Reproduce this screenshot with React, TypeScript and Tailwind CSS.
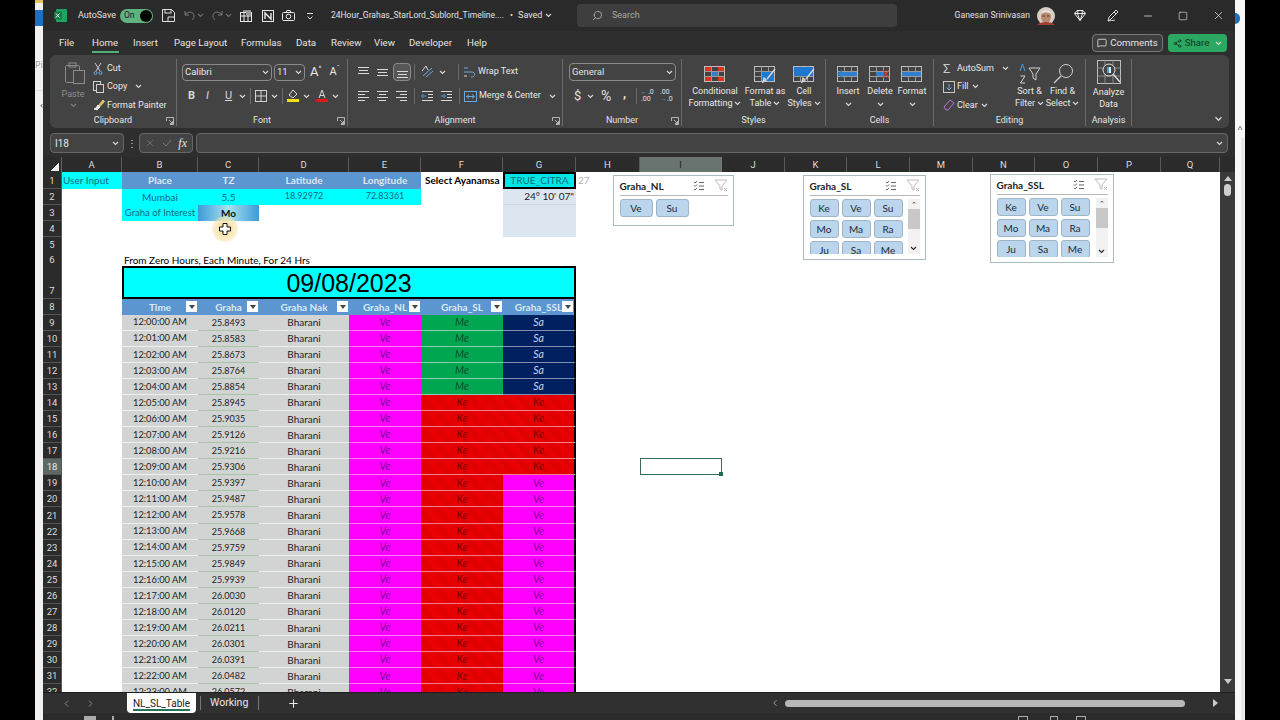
import type { ReactNode } from "react"
import { Search, Plus, ChevronLeft, ChevronRight, X, Minus, Square, MessageSquare, Share2 } from "lucide-react"

const UI = "font-['Roboto','Open_Sans',sans-serif]"
const SHEET = "font-['Lato','Open_Sans',sans-serif]"
const COLS = "grid grid-cols-[19px_60px_76px_61px_90px_72px_82px_73px_64px_82px_63px_62px_63px_63px_62px_63px_63px_59px]"

const GRAHA = [
  "25.8493", "25.8583", "25.8673", "25.8764", "25.8854", "25.8945", "25.9035", "25.9126",
  "25.9216", "25.9306", "25.9397", "25.9487", "25.9578", "25.9668", "25.9759", "25.9849",
  "25.9939", "26.0030", "26.0120", "26.0211", "26.0301", "26.0391", "26.0482", "26.0572",
]

const PLANET: Record<string, string> = {
  Ve: "bg-[#ff00ff] text-[#7a0098]",
  Me: "bg-[#00a650] text-[#0b4a26]",
  Sa: "bg-[#002060] text-[#c9d3ea]",
  Ke: "bg-[repeating-linear-gradient(45deg,#ee0000_0,#ee0000_1px,#da0000_1px,#da0000_2px)] text-[#780000]",
}

function Ico({ w = 14, h = 14, children, className = "" }: { w?: number; h?: number; children: ReactNode; className?: string }) {
  return (
    <svg width={w} height={h} viewBox={`0 0 ${w} ${h}`} fill="none" stroke="currentColor" strokeWidth="1" className={"shrink-0 " + className}>
      {children}
    </svg>
  )
}

function Chev({ className = "" }: { className?: string }) {
  return (
    <svg width="7" height="5" viewBox="0 0 7 5" fill="none" stroke="#d8d8d8" strokeWidth="1.1" className={"shrink-0 " + className}>
      <path d="M1 1l2.5 2.5L6 1" />
    </svg>
  )
}

function Launcher() {
  return (
    <svg width="8" height="8" viewBox="0 0 8 8" fill="none" stroke="#cfcfcf" strokeWidth="0.8" className="absolute right-[2px] top-[3px]">
      <path d="M0.5 4V0.5H7.5V7.5H4M3 3l3.5 3.5M6.5 4v2.5H4" />
    </svg>
  )
}

function Group({ width, label, launcher, children }: { width: string; label: string; launcher?: boolean; children: ReactNode }) {
  return (
    <div className={"flex h-full shrink-0 flex-col border-r border-[#6a6a6a] " + width}>
      <div className="h-[55px]">{children}</div>
      <div className="relative h-[12px] text-center text-[9px] leading-[12px] text-[#e4e4e4]">
        {label}
        {launcher && <Launcher />}
      </div>
    </div>
  )
}

function Lines({ kind }: { kind: string }) {
  const ys = kind === "top" ? [2, 5, 8] : kind === "mid" ? [4, 7, 10] : kind === "bot" ? [6, 9, 12] : [2, 5, 8, 11]
  return (
    <Ico w={13} h={14} className="text-[#d8d8d8]">
      {ys.map((y, i) => {
        let x1 = 1
        let x2 = 12
        if (i % 2 === 1) {
          if (kind === "left") x2 = 8
          if (kind === "center") { x1 = 3; x2 = 10 }
          if (kind === "right") x1 = 5
          if (kind === "top" || kind === "mid" || kind === "bot") { x1 = 2; x2 = 11 }
        }
        return <path key={y} d={`M${x1} ${y + 0.5}H${x2}`} />
      })}
    </Ico>
  )
}

function Indent({ more }: { more?: boolean }) {
  return (
    <Ico w={13} h={14}>
      <path d="M1 2.5H12M7 5.5H12M7 8.5H12M1 11.5H12" stroke="#d8d8d8" />
      <path d={more ? "M1 7H5M3.5 5L5.5 7L3.5 9" : "M5 7H1M2.5 5L0.5 7L2.5 9"} stroke="#4a9fe0" />
    </Ico>
  )
}

function BigGrid({ children }: { children?: ReactNode }) {
  return (
    <Ico w={22} h={18}>
      <rect x="0.5" y="1.5" width="20" height="15" stroke="#bdbdbd" />
      <path d="M0.5 6.5H20.5M0.5 11.5H20.5M7.5 1.5V16.5M14.5 1.5V16.5" stroke="#9a9a9a" />
      {children}
    </Ico>
  )
}

function Brush() {
  return <path d="M21 4L13 14M12 15l-3 2 1-4z" stroke="#d8d8d8" strokeWidth="1.4" />
}

function BigBtn({ width, icon, lines, chevOwnLine }: { width: string; icon: ReactNode; lines: string[]; chevOwnLine?: boolean }) {
  return (
    <div className={"flex shrink-0 flex-col items-center text-[9px] leading-[12px] text-[#e8e8e8] " + width}>
      <div className="mt-[4px] flex h-[22px] items-center">{icon}</div>
      <div className="whitespace-nowrap">{lines[0]}</div>
      {chevOwnLine ? (
        <Chev className="mt-[5px]" />
      ) : (
        <div className="flex items-center gap-[2px] whitespace-nowrap">
          {lines[1]}
          <Chev />
        </div>
      )}
    </div>
  )
}

function SmallBtn({ icon, label, chev, tight }: { icon: ReactNode; label: string; chev?: boolean; tight?: boolean }) {
  return (
    <div className="flex h-[18.5px] items-center whitespace-nowrap text-[9px] text-[#e8e8e8]">
      <div className="flex w-[14px] shrink-0 justify-start">{icon}</div>
      <span>{label}</span>
      {chev && <Chev className={tight ? "ml-[3px]" : "ml-[8px]"} />}
    </div>
  )
}

function Ribbon() {
  return (
    <div className={"mx-[7px] flex h-[73px] w-[1179px] rounded-md bg-[#434343] pb-[2px] pt-[4px] " + UI}>
      <Group width="w-[127px]" label="Clipboard" launcher>
        <div className="flex">
          <div className="flex w-[43px] flex-col items-center">
            <Ico w={22} h={24} className="ml-[6px] mt-[2px] text-[#8c8c8c]">
              <rect x="1.5" y="4.5" width="14" height="17" rx="1" />
              <rect x="5" y="2" width="7" height="4" />
              <rect x="9.5" y="9.5" width="11" height="13" fill="#434343" />
            </Ico>
            <span className="ml-[3px] mt-[3px] text-[9px] leading-[12px] text-[#8c8c8c]">Paste</span>
            <Chev className="ml-[3px] mt-[3px] opacity-40" />
          </div>
          <div className="flex flex-col">
            <SmallBtn label="Cut" icon={<Ico w={10} h={13}><path d="M2 1l5 8M8 1L3 9" stroke="#c8c8c8" /><circle cx="2.5" cy="11" r="1.5" stroke="#6aa8e0" /><circle cx="7.5" cy="11" r="1.5" stroke="#6aa8e0" /></Ico>} />
            <SmallBtn label="Copy" chev icon={<Ico w={12} h={13} className="text-[#d0d0d0]"><rect x="0.5" y="1.5" width="7" height="9" /><rect x="3.5" y="4.5" width="7" height="8" fill="#434343" /></Ico>} />
            <SmallBtn label="Format Painter" icon={<Ico w={12} h={12}><path d="M5 7L10 1l1.5 1.5L6.5 8z" fill="#e0c070" stroke="#e0c070" /><path d="M5 6l2 2-3 3-3-1 2-1z" fill="#e8e8e8" stroke="#e8e8e8" /></Ico>} />
          </div>
        </div>
      </Group>

      <Group width="w-[171px]" label="Font" launcher>
        <div className="flex flex-col pl-[5px] pt-[4px]">
          <div className="flex h-[18px] items-center text-[9.5px] text-[#e8e8e8]">
            <div className="flex h-[17px] w-[90px] items-center justify-between rounded-sm border border-[#8a8a8a] pl-[2px] pr-[2px]">Calibri<Chev /></div>
            <div className="ml-[2px] flex h-[17px] w-[31px] items-center justify-between rounded-sm border border-[#8a8a8a] pl-[2px] pr-[2px]">11<Chev /></div>
            <span className="ml-[5px] text-[13px]">A</span><span className="mb-[6px] text-[7px]">^</span>
            <span className="ml-[8px] text-[11px]">A</span><span className="mb-[6px] text-[7px]">ˇ</span>
          </div>
          <div className="mt-[6px] flex h-[18px] items-center text-[11px] text-[#d8d8d8]">
            <span className="ml-[6px] w-[18px] font-bold">B</span>
            <span className="w-[19px] italic">I</span>
            <span className="w-[14px] underline">U</span>
            <Chev />
            <div className="mx-[4px] h-[16px] w-px bg-[#6a6a6a]" />
            <Ico w={12} h={12} className="text-[#d0d0d0]"><rect x="0.5" y="0.5" width="11" height="11" /><path d="M6 0.5V11.5M0.5 6H11.5" /></Ico>
            <Chev className="ml-[4px]" />
            <div className="mx-[4px] h-[16px] w-px bg-[#6a6a6a]" />
            <Ico w={12} h={14}><path d="M6 1L2 6l4 3 4-4z" stroke="#d8d8d8" /><rect x="0" y="10" width="12" height="3" fill="#f2e21c" stroke="none" /></Ico>
            <Chev className="ml-[4px]" />
            <div className="ml-[6px]" />
            <Ico w={12} h={14}><path d="M3 9L6 1l3 8M4 6.5H8" stroke="#d8d8d8" /><rect x="0" y="10" width="12" height="3" fill="#e01818" stroke="none" /></Ico>
            <Chev className="ml-[4px]" />
          </div>
        </div>
      </Group>

      <Group width="w-[215px]" label="Alignment" launcher>
        <div className="flex flex-col pl-[9px] pt-[4px] text-[9px] text-[#e8e8e8]">
          <div className="flex h-[18px] items-center">
            <div className="w-[19px]"><Lines kind="top" /></div>
            <div className="w-[17px]"><Lines kind="mid" /></div>
            <div className="flex h-[18px] w-[18px] items-center justify-center rounded-sm border border-[#8a8a8a] bg-[#565656]"><Lines kind="bot" /></div>
            <div className="mx-[3px] h-[16px] w-px bg-[#6a6a6a]" />
            <Ico w={14} h={14} className="ml-[3px]"><path d="M2 11L11 3M5 12L12 6" stroke="#6aa8e0" /><path d="M1 6L5 1l2 4" stroke="#d8d8d8" /></Ico>
            <Chev className="ml-[4px]" />
            <div className="ml-[12px] mr-[3px] h-[16px] w-px bg-[#6a6a6a]" />
            <Ico w={13} h={14} className="ml-[1px]"><path d="M1 3H5M1 7H8C13 7 13 12 8 12" stroke="#6aa8e0" /><path d="M1 11H4" stroke="#d8d8d8" /></Ico>
            <span className="ml-[2px] whitespace-nowrap">Wrap Text</span>
          </div>
          <div className="mt-[6px] flex h-[18px] items-center">
            <div className="w-[19px]"><Lines kind="left" /></div>
            <div className="w-[19px]"><Lines kind="center" /></div>
            <div className="w-[16px]"><Lines kind="right" /></div>
            <div className="mx-[3px] h-[16px] w-px bg-[#6a6a6a]" />
            <div className="ml-[3px] w-[19px]"><Indent /></div>
            <div className="w-[14px]"><Indent more /></div>
            <div className="mx-[3px] ml-[5px] h-[16px] w-px bg-[#6a6a6a]" />
            <Ico w={13} h={13} className="ml-[1px]"><rect x="0.5" y="1.5" width="12" height="10" stroke="#6aa8e0" /><path d="M2.5 6.5H10.5M8 4.5L10.5 6.5L8 8.5M5 4.5L2.5 6.5L5 8.5" stroke="#6aa8e0" /></Ico>
            <span className="ml-[2px] w-[62px] whitespace-nowrap">Merge &amp; Center</span>
            <Chev className="ml-[8px]" />
          </div>
        </div>
      </Group>

      <Group width="w-[119px]" label="Number" launcher>
        <div className="flex flex-col pl-[6px] pt-[4px] text-[#e0e0e0]">
          <div className="flex h-[18px] w-[107px] items-center justify-between rounded-sm border border-[#8a8a8a] px-[2px] text-[9.5px]">General<Chev /></div>
          <div className="mt-[6px] flex h-[18px] items-center text-[13px]">
            <span className="ml-[5px] w-[13px]">$</span>
            <Chev />
            <span className="ml-[7px] w-[22px] text-[14px]">%</span>
            <span className="mb-[4px] w-[13px] font-bold">,</span>
            <div className="h-[16px] w-px bg-[#6a6a6a]" />
            <div className="ml-[4px] w-[19px] text-[7px] leading-[7px]"><span className="text-[#4a9fe0]">←</span>.0<br />.00</div>
            <div className="w-[18px] text-[7px] leading-[7px]">.00<br /><span className="text-[#4a9fe0]">→</span>.0</div>
          </div>
        </div>
      </Group>

      <Group width="w-[144px]" label="Styles">
        <div className="flex pl-[2px]">
          <BigBtn width="w-[62px]" lines={["Conditional", "Formatting"]} icon={<BigGrid><rect x="1" y="2" width="6" height="4" fill="#e03020" stroke="none" /><rect x="8" y="7" width="6" height="4" fill="#2f80d0" stroke="none" /><rect x="1" y="12" width="6" height="4" fill="#e03020" stroke="none" /><rect x="14" y="2" width="6" height="4" fill="#e03020" stroke="none" /><rect x="14" y="12" width="6" height="4" fill="#e03020" stroke="none" /></BigGrid>} />
          <BigBtn width="w-[38px]" lines={["Format as", "Table"]} icon={<BigGrid><rect x="8" y="7" width="12" height="9" fill="#1f78d0" stroke="none" /><Brush /></BigGrid>} />
          <BigBtn width="w-[40px]" lines={["Cell", "Styles"]} icon={<BigGrid><rect x="1" y="2" width="19" height="9" fill="#1f78d0" stroke="none" /><Brush /></BigGrid>} />
        </div>
      </Group>

      <Group width="w-[108px]" label="Cells">
        <div className="flex pl-[6px]">
          <BigBtn width="w-[32px]" lines={["Insert"]} chevOwnLine icon={<BigGrid><rect x="4" y="7" width="16" height="4" fill="#2f80d0" stroke="none" /><path d="M0 9L5 5V13Z" fill="#2f80d0" stroke="none" /></BigGrid>} />
          <BigBtn width="w-[32px]" lines={["Delete"]} chevOwnLine icon={<BigGrid><rect x="7" y="7" width="8" height="4" fill="#2f80d0" stroke="none" /><path d="M14 5l6 8M20 5l-6 8" stroke="#e04030" strokeWidth="1.2" /></BigGrid>} />
          <BigBtn width="w-[32px]" lines={["Format"]} chevOwnLine icon={<BigGrid><rect x="1" y="7" width="19" height="4" fill="#2f80d0" stroke="none" /></BigGrid>} />
        </div>
      </Group>

      <Group width="w-[152px]" label="Editing">
        <div className="flex">
          <div className="flex w-[79px] flex-col pl-[9px]">
            <SmallBtn label="AutoSum" chev icon={<span className="text-[13px] leading-none text-[#c8c8c8]">Σ</span>} />
            <SmallBtn label="Fill" chev tight icon={<Ico w={12} h={12}><rect x="0.5" y="0.5" width="11" height="11" stroke="#c8c8c8" /><path d="M6 3V9M3.5 6.5L6 9L8.5 6.5" stroke="#6aa8e0" /></Ico>} />
            <SmallBtn label="Clear" chev tight icon={<Ico w={12} h={12}><path d="M1 8L7 1l4 3-6 7H3z" stroke="#c070d0" /></Ico>} />
          </div>
          <BigBtn width="w-[33px]" lines={["Sort &", "Filter"]} icon={<Ico w={22} h={22}><path d="M1 8L3.5 1L6 8" stroke="#4a9fe0" /><path d="M1.5 13H6L1.5 20H6" stroke="#d0d0d0" /><path d="M10 5H21L17 11V17L14 15V11Z" stroke="#d0d0d0" /></Ico>} />
          <BigBtn width="w-[33px]" lines={["Find &", "Select"]} icon={<Ico w={22} h={22}><circle cx="14" cy="8" r="6.5" stroke="#d0d0d0" /><path d="M9 13L2 20" stroke="#d0d0d0" strokeWidth="1.2" /></Ico>} />
        </div>
      </Group>

      <Group width="w-[46px]" label="Analysis">
        <div className="flex flex-col items-center text-[9px] leading-[12px] text-[#e8e8e8]">
          <Ico w={24} h={24} className="mt-[1px]">
            <rect x="0.5" y="0.5" width="23" height="23" stroke="#bdbdbd" />
            <path d="M0.5 8H23.5M0.5 16H23.5M8 0.5V23.5M16 0.5V23.5" stroke="#8a8a8a" />
            <circle cx="12" cy="10" r="6" fill="#434343" stroke="#e0e0e0" />
            <rect x="10" y="7" width="2" height="6" fill="#4a9fe0" stroke="none" />
            <rect x="12" y="7" width="2" height="6" fill="#e8e8e8" stroke="none" />
            <path d="M16 14L23 22" stroke="#e0e0e0" strokeWidth="1.4" />
          </Ico>
          <span className="mt-[2px]">Analyze</span>
          <span>Data</span>
        </div>
      </Group>

      <div className="flex flex-1 items-end justify-end pb-[4px] pr-[6px]">
        <Chev className="h-[6px] w-[9px]" />
      </div>
    </div>
  )
}

function TitleBar() {
  return (
    <div className={"flex h-[31px] items-center bg-[#2a2a2a] text-[9px] text-[#e0e0e0] " + UI}>
      <svg width="13" height="13" viewBox="0 0 13 13" className="ml-[11px] shrink-0">
        <rect x="2" y="0" width="11" height="13" rx="1" fill="#21a366" />
        <rect x="0" y="2.5" width="8" height="8" rx="1" fill="#107c41" />
        <path d="M2 4.5l3.5 4M5.5 4.5L2 8.5" stroke="#fff" strokeWidth="1" />
      </svg>
      <span className="ml-[11px] w-[37px] whitespace-nowrap">AutoSave</span>
      <div className="ml-[5px] flex h-[14px] w-[33px] shrink-0 items-center justify-between rounded-full bg-[#62b27e] pl-[4px] pr-[1px] text-[8.5px] text-[#123]">
        On
        <div className="h-[12px] w-[12px] rounded-full bg-black" />
      </div>
      <Ico w={13} h={13} className="ml-[9px] text-[#e0e0e0]"><path d="M0.5 0.5H9.5L12.5 3.5V12.5H0.5Z" /><rect x="3" y="0.5" width="6" height="3.5" /><path d="M6 12.5V8H12" stroke="#e0e0e0" /></Ico>
      <Ico w={11} h={11} className="ml-[9px] text-[#7a7a7a]"><path d="M1 1V5H5M1 5C3 1 10 1 10 6C10 8 9 9 8 10" /></Ico>
      <Chev className="ml-[2px] opacity-40" />
      <Ico w={11} h={11} className="ml-[8px] text-[#7a7a7a]"><path d="M10 1V5H6M10 5C8 1 1 1 1 6C1 8 2 9 3 10" /></Ico>
      <Chev className="ml-[2px] opacity-40" />
      <Ico w={12} h={12} className="ml-[8px] text-[#e8e8e8]"><rect x="0.5" y="2.5" width="11" height="9" /><path d="M0.5 6H11.5M4 2.5V11.5M8 2.5V11.5M3 1H11" /><rect x="6" y="1" width="5" height="4" fill="#999" stroke="none" /></Ico>
      <Ico w={12} h={12} className="ml-[10px] text-[#e8e8e8]"><rect x="0.5" y="0.5" width="11" height="11" /><path d="M3 9V3L9 9V3" strokeWidth="1.4" /></Ico>
      <Ico w={13} h={11} className="ml-[8px] text-[#e8e8e8]"><rect x="0.5" y="2.5" width="12" height="8" rx="1" /><circle cx="6.5" cy="6.5" r="2.3" /><path d="M4 2.5l1-2h3l1 2" /></Ico>
      <Ico w={8} h={8} className="ml-[11px] text-[#e0e0e0]"><path d="M1 1.5H7M1.5 4.5L4 7L6.5 4.5" /></Ico>
      <div className="ml-[17px] flex w-[246px] shrink-0 items-center">
        <span className="w-[173px] whitespace-nowrap text-[8.5px]">24Hour_Grahas_StarLord_Sublord_Timeline....</span>
        <span className="ml-[6px]">•</span>
        <span className="ml-[5px]">Saved</span>
        <Chev className="ml-[3px]" />
      </div>
      <div className="flex h-[23px] w-[320px] shrink-0 items-center rounded-sm bg-[#3e3e3e] pl-[15px] text-[#a8a8a8]">
        <Search size={11} className="-scale-x-100" />
        <span className="ml-[9px]">Search</span>
      </div>
      <span className="ml-auto whitespace-nowrap text-[8.6px]">Ganesan Srinivasan</span>
      <svg width="18" height="18" viewBox="0 0 18 18" className="ml-[7px] shrink-0">
        <circle cx="9" cy="9" r="9" fill="#d8cfc4" />
        <ellipse cx="9" cy="10" rx="5" ry="6" fill="#b88870" />
        <path d="M4 7C5 2 13 2 14 7C11 5 7 5 4 7Z" fill="#e8e4e0" />
        <path d="M5.5 9H8M10 9H12.5" stroke="#5a3a2a" />
        <path d="M0 18C3 14 15 14 18 18Z" fill="#a04030" />
      </svg>
      <Ico w={12} h={11} className="ml-[19px] text-[#e8e8e8]"><path d="M3 0.5H9L11.5 3.5L6 10.5L0.5 3.5ZM0.5 3.5H11.5M4 0.5L3.5 3.5L6 10.5L8.5 3.5L8 0.5" /></Ico>
      <Ico w={12} h={13} className="ml-[21px] text-[#d8d8d8]"><path d="M1 12L2 8L9 1L11 3L4 10ZM7 3L9 5M1 12C4 11 5 12 8 11" /></Ico>
      <Minus size={12} className="ml-[23px] text-[#b8b8b8]" />
      <Square size={10} strokeWidth={1.5} className="ml-[24px]" />
      <X size={13} strokeWidth={1.4} className="ml-[24px] mr-[10px]" />
    </div>
  )
}

function TabsBar() {
  const tabs: [string, string][] = [
    ["File", "w-[33px]"], ["Home", "w-[41px]"], ["Insert", "w-[41px]"], ["Page Layout", "w-[67px]"], ["Formulas", "w-[55px]"],
    ["Data", "w-[35px]"], ["Review", "w-[43px]"], ["View", "w-[35px]"], ["Developer", "w-[58px]"], ["Help", "w-[25px]"],
  ]
  return (
    <div className={"flex h-[24px] items-center bg-[#2e2e2e] pl-[16px] text-[9.7px] text-[#e4e4e4] " + UI}>
      {tabs.map(([t, w]) => (
        <span key={t} className={"relative whitespace-nowrap " + w}>
          {t}
          {t === "Home" && <span className="absolute -bottom-[3px] left-0 h-[2px] w-[27px] bg-[#4fb07a]" />}
        </span>
      ))}
      <div className="ml-auto flex h-[18px] w-[71px] items-center justify-center gap-[3px] rounded-sm border border-[#777] bg-[#3e3e3e]">
        <MessageSquare size={10} />Comments
      </div>
      <div className="ml-[5px] mr-[8px] flex h-[18px] w-[59px] items-center justify-center gap-[3px] rounded-sm bg-[#2ba862] text-[#12351f]">
        <Share2 size={9} />Share<Chev className="ml-[3px]" />
      </div>
    </div>
  )
}

function FormulaBar() {
  return (
    <div className={"mx-[7px] mt-[5px] flex h-[20px] items-stretch text-[10px] text-[#e4e4e4] " + UI}>
      <div className="flex w-[74px] items-center justify-between rounded-sm border border-[#666] bg-[#434343] pl-[4px] pr-[4px]">I18<Chev /></div>
      <div className="flex w-[15px] items-center justify-center text-[#d0d0d0]">⋮</div>
      <div className="flex w-[54px] items-center justify-between rounded-sm border border-[#666] bg-[#434343] px-[5px]">
        <X size={10} className="text-[#777]" />
        <svg width="10" height="8" viewBox="0 0 10 8" fill="none" stroke="#777"><path d="M1 4l3 3 5-6" /></svg>
        <span className="font-['Liberation_Serif',serif] text-[12px] italic">fx</span>
      </div>
      <div className="ml-[3px] flex flex-1 items-center justify-end rounded-sm border border-[#666] bg-[#434343] pr-[4px]"><Chev /></div>
    </div>
  )
}

function ColHeaders() {
  const letters = "ABCDEFGHIJKLMNOPQ".split("")
  return (
    <div className={COLS + " h-[15px] bg-[#2b2b2b] text-[9.5px] leading-[15px] text-[#dcdcdc] " + UI}>
      <div className="flex items-end justify-end border-r border-[#666] pb-[1px] pr-[2px]">
        <div className="h-[9px] w-[9px] bg-[linear-gradient(135deg,transparent_50%,#eeeeee_50%)]" />
      </div>
      {letters.map((l) => (
        <div key={l} className={"text-center " + (l === "I" ? "border-r border-[#777] bg-[#69736f] text-[#222]" : "border-r border-[#5a5a5a]")}>{l}</div>
      ))}
    </div>
  )
}

function RowNo({ n }: { n: number }) {
  const sel = n === 18
  return (
    <div className={"flex items-end justify-center border-b border-r border-[#555] text-[9.5px] leading-[15px] " + UI + (sel ? " bg-[#5c6865] text-[#eaeaea]" : " bg-[#2b2b2b] text-[#dcdcdc]")}>{n}</div>
  )
}

function FilterBtn() {
  return (
    <span className="absolute right-[1px] top-[2px] flex h-[11px] w-[11px] items-center justify-center bg-white">
      <span className="h-0 w-0 border-x-[3px] border-t-[4px] border-x-transparent border-t-[#444]" />
    </span>
  )
}

function Empty() {
  return <div />
}

function TopRows() {
  const head = "flex items-center justify-center bg-[#5b96d0] font-bold text-[#dce8f2]"
  const cyan = "flex items-center justify-center bg-[#00ffff] text-[#0e6b80]"
  return (
    <>
      <div className={COLS + " h-[16.5px] " + SHEET}>
        <RowNo n={1} />
        <div className="flex items-center bg-[#00ffff] pl-[1px] text-[#0e6b80]">User Input</div>
        <div className={head}>Place</div>
        <div className={head}>TZ</div>
        <div className={head}>Latitude</div>
        <div className={head}>Longitude</div>
        <div className="flex items-center whitespace-nowrap pl-[4px] font-bold text-black">Select Ayanamsa</div>
        <div className="z-10 flex items-center justify-center border-2 border-black bg-[#00e6e6] text-[#0e6b80]">TRUE_CITRA</div>
        <div className="flex items-center pl-[2px] text-[#b0b0b0]">27</div>
      </div>
      <div className={COLS + " h-[16px] " + SHEET}>
        <RowNo n={2} />
        <Empty />
        <div className={cyan}>Mumbai</div>
        <div className={cyan}>5.5</div>
        <div className={cyan + " pb-[2px] text-[9px]"}>18.92972</div>
        <div className={cyan + " pb-[2px] text-[9px]"}>72.83361</div>
        <Empty />
        <div className="flex items-center justify-end border-b border-[#c8d8e4] bg-[#dce6f1] pr-[2px] text-[#222]">24° 10' 07"</div>
      </div>
      <div className={COLS + " h-[16px] " + SHEET}>
        <RowNo n={3} />
        <Empty />
        <div className="flex items-center justify-center whitespace-nowrap bg-[#00ffff] text-[9.5px] text-[#0e6b80]">Graha of Interest</div>
        <div className="flex items-center justify-center bg-[linear-gradient(90deg,#3d9ad8,#a8e2ee,#3d9ad8)] font-bold text-[#111]">Mo</div>
        <Empty />
        <Empty />
        <Empty />
        <div className="bg-[#dce6f1]" />
      </div>
      <div className={COLS + " h-[16px] " + SHEET}>
        <RowNo n={4} />
        <Empty />
        <Empty />
        <Empty />
        <Empty />
        <Empty />
        <Empty />
        <div className="bg-[#dce6f1]" />
      </div>
      <div className={COLS + " h-[15.5px]"}>
        <RowNo n={5} />
      </div>
      <div className={COLS + " h-[14px] " + SHEET}>
        <RowNo n={6} />
        <Empty />
        <div className="flex items-center whitespace-nowrap pl-[2px] text-black">From Zero Hours, Each Minute, For 24 Hrs</div>
      </div>
      <div className={COLS + " h-[33px]"}>
        <RowNo n={7} />
        <Empty />
        <div className="col-span-6 flex items-center justify-center border-2 border-black bg-[#00ffff] pt-[1px] font-['Liberation_Sans',Arial,sans-serif] text-[25px] text-black">09/08/2023</div>
      </div>
      <div className={COLS + " h-[15.5px] " + SHEET}>
        <RowNo n={8} />
        <Empty />
        {["Time", "Graha", "Graha Nak", "Graha_NL", "Graha_SL", "Graha_SSL"].map((h) => (
          <div key={h} className={"relative overflow-hidden " + head + (h === "Graha_SSL" ? " border-r-2 border-black" : "")}>
            {h}
            <FilterBtn />
          </div>
        ))}
      </div>
    </>
  )
}

function DataRow({ n, i }: { n: number; i: number }) {
  const time = `12:${String(i).padStart(2, "0")}:00 AM`
  const sl = i < 5 ? "Me" : "Ke"
  const ssl = i < 5 ? "Sa" : i < 10 ? "Ke" : "Ve"
  const gray = "flex items-center justify-center border-b border-[#eeeeee] bg-[#d2d4d4] text-[#222]"
  const plan = "flex items-center justify-center border-b border-[#ffffff80] text-[10.5px] italic "
  return (
    <div className={COLS + " h-[16.08px] " + SHEET}>
      <RowNo n={n} />
      <Empty />
      <div className={gray + " text-[9.3px]"}>{time}</div>
      <div className="flex items-center justify-center border-b border-[#a9c4a9] bg-[#d2d4d4] text-[9px] text-[#222]">{GRAHA[i]}</div>
      <div className={gray}>Bharani</div>
      <div className={plan + PLANET.Ve}>Ve</div>
      <div className={plan + PLANET[sl]}>{sl}</div>
      <div className={plan + PLANET[ssl] + " border-r-2 border-r-black"}>{ssl}</div>
      {n === 18 && (
        <>
          <Empty />
          <div className="relative -mt-[1px] border-[1.5px] border-[#3a6a58] bg-white">
            <span className="absolute -bottom-[2px] -right-[2px] h-[4px] w-[4px] bg-[#1f6b4a]" />
          </div>
        </>
      )}
    </div>
  )
}

function Slicer({ title, pos, items, listW, scroll, btnW }: { title: string; pos: string; items: string[]; listW: string; scroll?: boolean; btnW: string }) {
  return (
    <div className={"absolute flex flex-col border-[1.5px] border-[#a9bcc0] bg-white px-[5.5px] " + pos + " " + SHEET}>
      <div className="flex h-[20px] shrink-0 items-center border-b border-[#b8b8b8] text-[10px] font-bold text-[#222]">
        {title}
        <Ico w={12} h={11} className="ml-auto text-[#666]"><path d="M1 2l1 1 2-2M1 5.5l1 1 2-2M1 9l1 1 2-2M6 2.5H11M6 6H11M6 9.5H11" /></Ico>
        <Ico w={14} h={13} className="ml-[9px] text-[#bbb]"><path d="M1 1H13L8 7V11L6 10V7Z" /><path d="M10 9l3 3M13 9l-3 3" /></Ico>
      </div>
      <div className="mt-[3px] flex min-h-0 flex-1 justify-between pb-[5px]">
        <div className={"flex flex-wrap content-start gap-[3px] overflow-hidden " + listW}>
          {items.map((t) => (
            <div key={t} className={"flex h-[18px] items-center justify-center rounded-[3px] border border-[#9fb4c4] bg-[#bad5ec] text-[10px] text-[#1c2b38] " + btnW}>{t}</div>
          ))}
        </div>
        {scroll && (
          <div className="flex w-[12px] flex-col items-center bg-[#f2f2f2]">
            <span className="text-[7px] leading-[10px] text-[#333]">⌃</span>
            <div className="h-[20px] w-full bg-[#c8c8c8]" />
            <Chev className="mb-[3px] mt-auto invert" />
          </div>
        )}
      </div>
    </div>
  )
}

function Grid() {
  const rows = []
  for (let i = 0; i < 24; i++) rows.push(<DataRow key={i} n={i + 9} i={i} />)
  const all = ["Ke", "Ve", "Su", "Mo", "Ma", "Ra", "Ju", "Sa", "Me"]
  return (
    <div className="relative h-[520px] w-[1177px] overflow-hidden bg-white text-[10px] leading-none">
      <TopRows />
      {rows}
      <Slicer title="Graha_NL" pos="left-[570px] top-[3px] h-[51px] w-[121px]" items={["Ve", "Su"]} listW="w-[108px]" btnW="w-[33px]" />
      <Slicer title="Graha_SL" pos="left-[760px] top-[3px] h-[85px] w-[123px]" items={all} listW="w-[93px]" btnW="w-[29px]" scroll />
      <Slicer title="Graha_SSL" pos="left-[947px] top-[2px] h-[89px] w-[124px]" items={all} listW="w-[93px]" btnW="w-[29px]" scroll />
      <div className="pointer-events-none absolute left-[182px] top-[57px] flex h-[26px] w-[26px] -translate-x-1/2 -translate-y-1/2 items-center justify-center rounded-full bg-[radial-gradient(circle,#f8e2a8_30%,#ffffff00_100%)]">
        <svg width="12" height="12" viewBox="0 0 12 12"><path d="M4 0.5H8V4H11.5V8H8V11.5H4V8H0.5V4H4Z" fill="#fff" stroke="#111" /></svg>
      </div>
    </div>
  )
}

function VScroll() {
  return (
    <div className="flex w-[15px] flex-col items-center bg-[#3a3a3a]">
      <span className="mt-[4px] h-0 w-0 border-x-[4px] border-b-[5px] border-x-transparent border-b-[#ccc]" />
      <div className="mt-[3px] h-[12px] w-[7px] rounded-full bg-[#cfcfcf]" />
      <span className="mb-[8px] mt-auto h-0 w-0 border-x-[4px] border-t-[5px] border-x-transparent border-t-[#ccc]" />
    </div>
  )
}

function SheetTabs() {
  return (
    <div className={"flex h-[21px] items-center border-t border-[#1e1e1e] bg-[#303030] text-[10.5px] text-[#e8e8e8] " + UI}>
      <div className="flex w-[727px] shrink-0 items-center">
        <ChevronLeft size={11} className="ml-[18px] text-[#8a8a8a]" />
        <ChevronRight size={11} className="ml-[13px] text-[#8a8a8a]" />
        <div className="relative ml-[31px] flex h-[20px] w-[69px] items-center justify-center rounded-b-sm bg-white text-[10px] text-[#222]">
          NL_SL_Table
          <span className="absolute bottom-[2px] left-[6px] right-[6px] h-[2px] bg-[#21735a]" />
        </div>
        <div className="ml-[4px] h-[14px] w-px bg-[#777]" />
        <span className="ml-[9px] w-[38px]">Working</span>
        <div className="ml-[10px] h-[14px] w-px bg-[#777]" />
        <Plus size={13} className="ml-[28px]" />
      </div>
      <ChevronLeft size={10} className="text-[#b0b0b0]" />
      <div className="ml-[5px] h-[7px] w-[400px] rounded-full bg-[#b8b8b8]" />
      <span className="ml-[28px] h-0 w-0 border-y-[4px] border-l-[5px] border-y-transparent border-l-[#ccc]" />
    </div>
  )
}

function StatusBar() {
  return (
    <div className="flex h-[7px] items-start overflow-hidden bg-[#2b2b2b] pt-[3px]">
      <div className="ml-[41px] h-[6px] w-[12px] bg-[#aaa]" />
      <div className="ml-[16px] h-[6px] w-[2px] bg-[#aaa]" />
      <div className="ml-[904px] h-[6px] w-[10px] border border-[#aaa]" />
      <div className="ml-[22px] h-[6px] w-[8px] border border-[#aaa]" />
      <div className="ml-[18px] h-[6px] w-[10px] border border-[#aaa]" />
    </div>
  )
}

export default function App() {
  return (
    <div className="flex h-[720px] w-[1280px] overflow-hidden bg-black">
      <div className="ml-[35px] flex w-[8px] flex-col bg-[#f1f1f1] font-['Open_Sans',sans-serif] text-[#999]">
        <div className="h-[3px] bg-[#e6c25a]" />
        <div className="mt-[7px] h-[16px] bg-[#1f6fc0]" />
        <div className="mt-[33px] text-[9px] leading-[12px]">Pi</div>
        <div className="mt-[19px] h-px bg-[#ddd]" />
        <div className="mt-[9px] text-right text-[9px] leading-[10px] text-[#333]">‹</div>
      </div>
      <div className="flex w-[1192px] flex-col bg-[#2e2e2e]">
        <TitleBar />
        <TabsBar />
        <Ribbon />
        <FormulaBar />
        <div className="mt-[4px]">
          <ColHeaders />
          <div className="flex">
            <Grid />
            <VScroll />
          </div>
        </div>
        <SheetTabs />
        <StatusBar />
      </div>
      <div className="flex w-[10px] flex-col bg-[#f8f8f8]">
        <div className="mt-[13px] h-[11px] w-[5px] rounded-r-full bg-[#1f6fc0]" />
        <div className="mt-[100px] text-center text-[9px] leading-[10px] text-[#444]">^</div>
        <div className="ml-[6px] mt-[4px] flex-1 bg-[#e8e8e8]" />
      </div>
    </div>
  )
}
